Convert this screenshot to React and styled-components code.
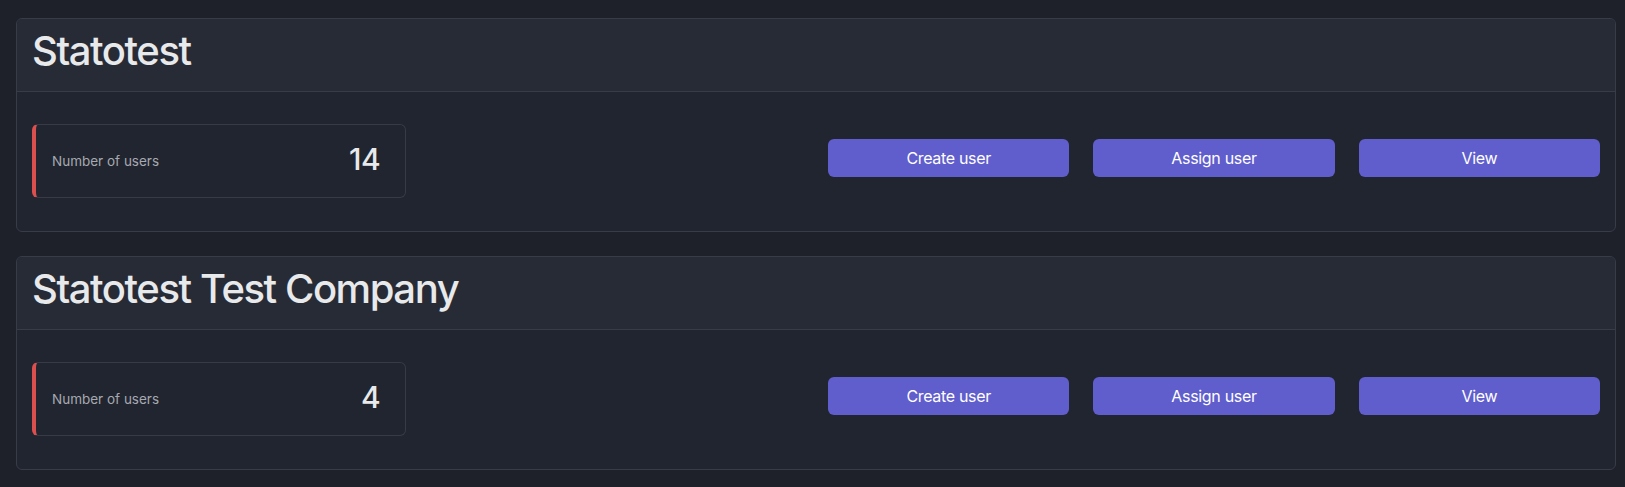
import React from "react";
import styled, { createGlobalStyle } from "styled-components";

const Global = createGlobalStyle`
  html, body { margin: 0; padding: 0; background: #1e2129; }
  body { font-family: Inter, "Noto Sans", "Liberation Sans", sans-serif; color: #e6e7ea; }
  * { box-sizing: border-box; }
`;

const Page = styled.div`
  padding: 18px 9px 16px 16px;
  display: flex;
  flex-direction: column;
  gap: 24px;
`;

const Card = styled.section`
  background: #21252f;
  border: 1px solid #383c47;
  border-radius: 6px;
  overflow: hidden;
`;

const CardHeader = styled.header`
  background: #272b36;
  border-bottom: 1px solid #383c47;
  padding: 8px 15px;
`;

const Title = styled.h1`
  margin: 0 0 8px;
  font-size: 40px;
  line-height: 48px;
  font-weight: 500;
  letter-spacing: -0.036em;
  color: #e8e9eb;
`;

const CardBody = styled.div`
  padding: 16px 15px 17px;
  display: grid;
  grid-template-columns: repeat(12, 1fr);
  column-gap: 24px;
  align-items: center;
`;

const Stat = styled.div`
  grid-column: span 3;
  margin: 16px 0;
  height: 74px;
  display: flex;
  align-items: center;
  justify-content: space-between;
  border: 1px solid #373b46;
  border-left: 4px solid #dc4f4f;
  border-radius: 6px;
  padding: 0 25px 0 16px;
`;

const StatLabel = styled.span`
  font-size: 13.5px;
  color: #a6a9b1;
`;

const StatValue = styled.span`
  font-size: 30px;
  line-height: 36px;
  font-weight: 500;
  letter-spacing: -0.02em;
  color: #e8e9eb;
  margin-bottom: 5px;
`;

const Button = styled.button`
  grid-column: span 2 / ${(p) => p.$end};
  height: 38px;
  margin-bottom: 6px;
  border: none;
  border-radius: 6px;
  background: #605dcd;
  color: #ffffff;
  font-family: inherit;
  font-size: 16px;
  letter-spacing: -0.02em;
  cursor: pointer;
`;

const companies = [
  { name: "Statotest", users: 14 },
  { name: "Statotest Test Company", users: 4 },
];

export default function App() {
  return (
    <>
      <Global />
      <Page>
        {companies.map((c) => (
          <Card key={c.name}>
            <CardHeader>
              <Title>{c.name}</Title>
            </CardHeader>
            <CardBody>
              <Stat>
                <StatLabel>Number of users</StatLabel>
                <StatValue>{c.users}</StatValue>
              </Stat>
              <Button $end={9}>Create user</Button>
              <Button $end={11}>Assign user</Button>
              <Button $end={13}>View</Button>
            </CardBody>
          </Card>
        ))}
      </Page>
    </>
  );
}
